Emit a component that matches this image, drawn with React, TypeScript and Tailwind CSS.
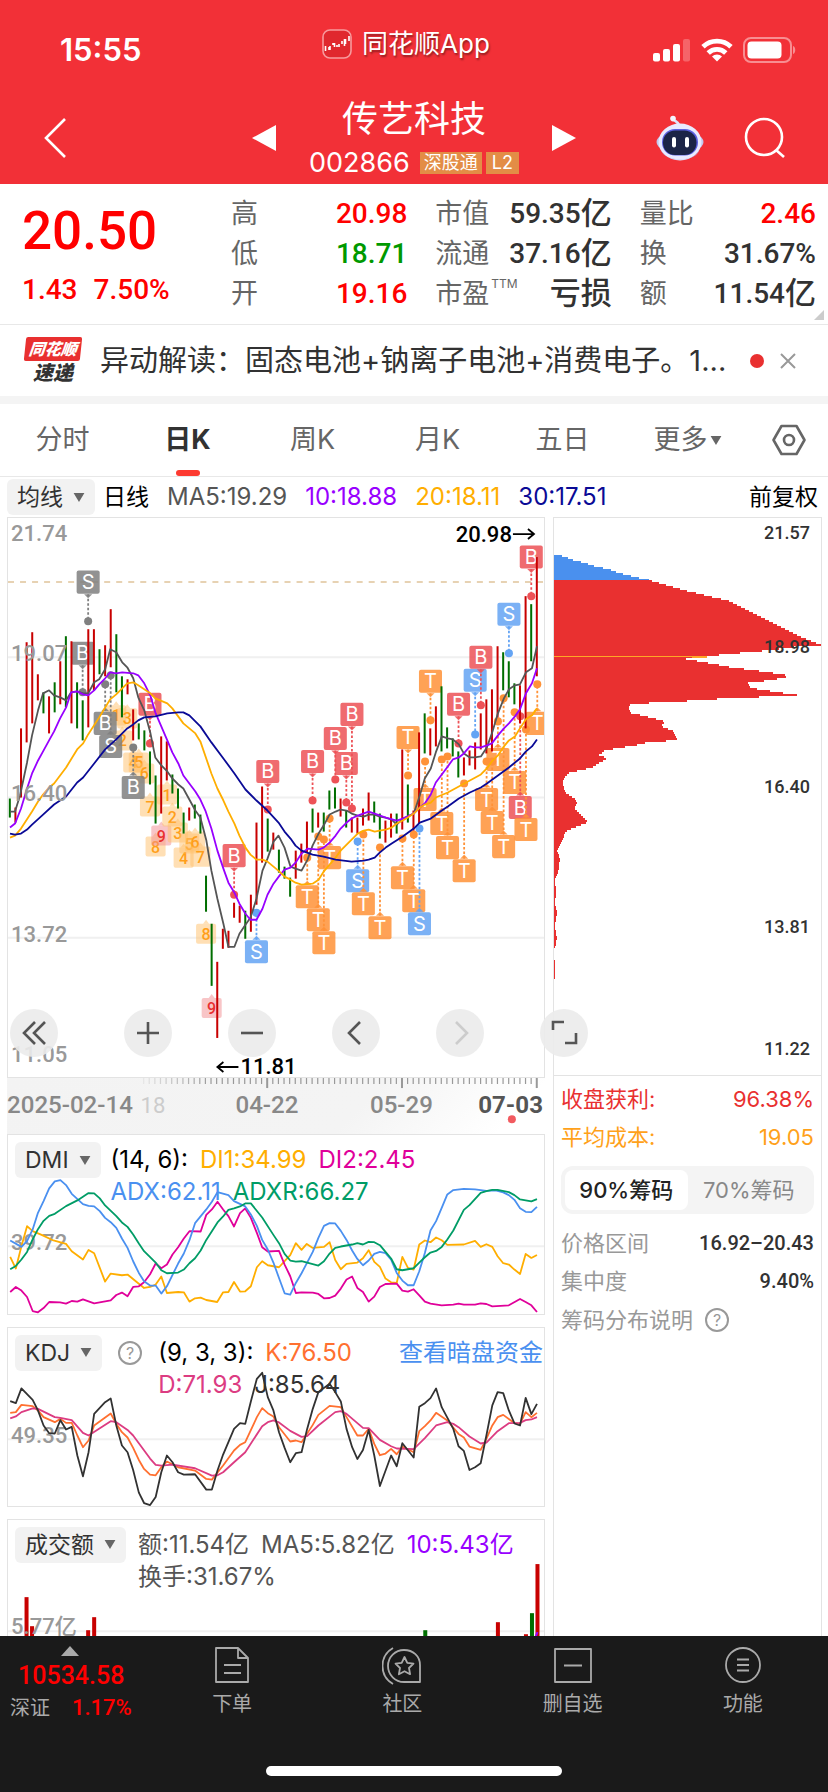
import React from "react";

const sans = "font-['Inter','Noto_Sans_CJK_SC',sans-serif]";
const num = "font-['Roboto','Noto_Sans_CJK_SC',sans-serif]";

const RED = "#c80000";
const GREEN = "#006e00";
const PITCH = 5.596;
const FIRST_X = 9.8;

/* High and low of each session, in chart units; "r" closes up, "g" closes down. */
const candles: [number, number, "r" | "g"][] = [
  [798, 817, "g"], [807, 822, "r"], [728, 797, "r"], [642, 742, "r"], [632, 723, "r"],
  [674, 700, "r"], [692, 713, "g"], [696, 733, "r"], [682, 712, "g"], [661, 704, "r"],
  [636, 707, "g"], [641, 723, "r"], [682, 728, "g"], [700, 740, "g"], [629, 727, "r"],
  [629, 690, "r"], [649, 674, "g"], [645, 676, "r"], [609, 667, "r"], [634, 692, "g"],
  [676, 717, "g"], [679, 694, "r"], [709, 740, "r"], [723, 739, "g"], [730, 750, "g"],
  [751, 784, "g"], [775, 823, "g"], [736, 813, "r"], [741, 780, "r"], [774, 793, "g"],
  [788, 808, "g"], [812, 833, "g"], [807, 820, "r"], [804, 818, "g"], [814, 833, "g"],
  [875, 911, "g"], [923, 985, "g"], [961, 1037, "r"], [928, 948, "r"], [930, 947, "r"],
  [902, 917, "r"], [905, 922, "r"], [910, 938, "g"], [894, 931, "r"], [822, 904, "r"],
  [786, 862, "r"], [818, 851, "g"], [832, 849, "r"], [849, 872, "g"], [866, 878, "g"],
  [877, 896, "g"], [850, 878, "r"], [843, 862, "r"], [821, 852, "r"], [808, 832, "g"],
  [812, 827, "r"], [812, 831, "g"], [790, 809, "g"], [787, 808, "g"], [798, 816, "r"],
  [810, 827, "g"], [817, 832, "r"], [817, 833, "r"], [808, 825, "r"], [792, 820, "r"],
  [801, 822, "g"], [813, 838, "g"], [820, 842, "r"], [813, 837, "r"], [813, 833, "g"],
  [749, 829, "r"], [784, 822, "g"], [810, 830, "r"], [732, 823, "r"], [713, 753, "g"],
  [728, 755, "r"], [706, 746, "r"], [686, 751, "g"], [727, 748, "g"], [738, 756, "g"],
  [751, 777, "g"], [757, 775, "r"], [750, 765, "r"], [742, 769, "r"], [713, 749, "r"],
  [699, 753, "r"], [689, 751, "r"], [646, 717, "r"], [652, 690, "g"], [661, 697, "g"],
  [683, 704, "g"], [685, 723, "r"], [596, 728, "r"], [604, 661, "g"], [557, 676, "r"],
];

const ma5 =
  "10,811 15,811 20,795 27,762 32,735 38,710 43,693 49,690 54,695 60,697 66,700 71,692 77,691 83,693 88,693 94,682 99,679 105,669 110,649 116,652 122,662 127,667 133,678 138,697 144,710 150,732 155,757 161,765 167,771 172,778 178,784 183,788 189,799 195,810 200,817 206,840 211,870 217,898 223,923 228,946 234,946 239,933 245,924 250,917 256,898 262,870 267,858 273,841 278,835 284,847 290,866 295,868 301,870 307,859 312,845 318,833 323,825 329,814 335,811 340,809 346,810 351,813 357,815 363,816 368,814 374,814 379,816 385,817 391,819 396,824 402,818 407,816 413,813 419,795 424,778 430,768 435,752 441,736 447,738 452,739 458,744 463,753 469,757 474,757 480,756 486,747 491,733 497,713 503,698 508,689 514,685 519,684 525,672 531,668 536,646";
const ma10 =
  "10,827 15,823 21,808 27,788 32,773 38,760 43,751 49,740 54,731 60,718 66,707 71,692 77,691 83,694 88,695 94,690 99,684 105,678 110,672 116,673 122,672 133,673 138,675 144,683 150,695 155,712 161,726 167,740 172,752 178,763 183,775 189,783 195,791 200,799 205,810 211,828 217,850 223,868 228,882 234,892 239,903 245,913 250,919 256,919 262,908 267,894 273,883 279,875 284,869 290,867 295,862 301,853 307,848 318,849 323,847 329,842 335,835 340,828 346,822 351,818 357,815 368,811 374,813 385,817 396,820 402,818 413,813 419,807 424,803 430,794 435,782 441,774 447,766 452,759 458,757 463,753 469,746 474,747 480,747 486,745 491,743 497,735 503,728 508,723 514,716 519,709 525,693 531,683 536,668";
const ma20 =
  "10,837 15,835 21,828 32,811 38,801 43,794 49,787 54,783 66,767 77,749 83,743 88,734 99,717 110,699 116,694 122,688 127,683 133,682 138,685 150,693 155,698 167,703 172,708 183,723 195,733 200,741 211,773 217,788 223,800 228,811 234,823 239,835 245,847 250,854 256,859 262,859 267,861 273,866 279,871 284,876 290,879 295,882 301,884 312,883 318,879 323,871 329,864 335,857 340,850 346,844 351,839 357,833 363,830 368,829 374,831 379,830 385,829 391,827 396,823 402,820 407,817 413,813 419,807 424,804 430,802 435,797 447,792 458,786 469,780 480,774 486,768 491,761 497,755 503,746 508,740 514,736 519,728 525,719 531,715 536,708";
const ma30 =
  "10,833 15,834 21,833 27,829 32,824 43,814 54,804 66,796 77,782 83,777 94,763 105,749 116,739 127,728 133,724 138,720 144,717 155,716 167,713 178,712 183,712 189,715 200,726 211,742 223,758 234,773 245,789 256,800 267,810 278,822 284,831 290,838 295,845 301,850 312,854 323,856 335,859 351,861 363,860 368,859 374,857 379,852 385,847 391,843 402,836 413,828 419,822 430,818 441,810 447,806 458,798 469,792 480,787 486,783 497,775 508,767 519,758 525,751 531,746 536,739";

type Mark = [string, string, number, number, number];
const GRAY = "#808080";
const ROSE = "#ed5257";
const BLUE = "#64a4f4";
const ORANGE = "#ff9238";

/* Trade marks: letter, colour, x, centre of the tag, height of the dot. */
const marks: Mark[] = [
  ["S", GRAY, 88, 582, 621], ["B", GRAY, 82.5, 653, 692], ["B", GRAY, 105, 723, 684],
  ["S", GRAY, 110.5, 746, 675], ["B", GRAY, 133, 787, 747], ["B", ROSE, 149.7, 704, 743],
  ["B", ROSE, 267.3, 771, 809], ["B", ROSE, 233.7, 855, 894], ["S", BLUE, 256, 951, 912],
  ["B", ROSE, 312, 761, 800], ["B", ROSE, 334.7, 738, 779], ["B", ROSE, 345.7, 763, 802],
  ["B", ROSE, 351.3, 714, 808], ["T", ORANGE, 407.3, 737, 775], ["T", ORANGE, 429.7, 681, 720],
  ["B", ROSE, 457.7, 704, 743], ["S", BLUE, 474.3, 680, 734], ["B", ROSE, 480, 657, 705],
  ["S", BLUE, 508, 614, 653], ["B", ROSE, 530.3, 557, 596], ["T", ORANGE, 536.3, 723, 684],
  ["T", ORANGE, 497, 759, 721], ["T", ORANGE, 513.7, 782, 712], ["B", ROSE, 519.3, 807, 716],
  ["T", ORANGE, 525, 829, 729], ["T", ORANGE, 502.7, 846, 698], ["T", ORANGE, 491.3, 822, 761],
  ["T", ORANGE, 485.7, 799, 761], ["T", ORANGE, 463.3, 870, 783], ["T", ORANGE, 446.7, 847, 756],
  ["T", ORANGE, 441, 823, 759], ["T", ORANGE, 424.3, 799, 761], ["T", ORANGE, 306.7, 896, 857],
  ["T", ORANGE, 317.7, 919, 836], ["T", ORANGE, 323.3, 942, 839], ["T", ORANGE, 329, 857, 818],
  ["S", BLUE, 357, 880, 841], ["T", ORANGE, 362.7, 903, 834], ["T", ORANGE, 379.3, 927, 847],
  ["T", ORANGE, 401.7, 877, 838], ["T", ORANGE, 413, 900, 834], ["S", BLUE, 418.7, 923, 828],
];

const counts: [string, number, number][] = [
  ["1", 116, 715], ["3", 127, 718], ["2", 122, 740], ["4", 133, 762], ["5", 138.5, 762],
  ["6", 144, 773], ["7", 149.7, 806], ["8", 155.3, 846], ["9", 161, 835], ["1", 166.7, 794],
  ["2", 172, 816], ["3", 177.5, 832], ["4", 183.3, 857], ["5", 189, 843], ["6", 194.7, 841],
  ["7", 200, 856], ["8", 205.7, 933], ["9", 211.3, 1007],
];

/* Chip distribution outline: [height, width]. */
const chips: [number, number][] = [
  [555, 0], [556, 8], [560, 19], [563, 31], [566.5, 42], [569, 54], [573, 65], [576, 77], [579, 89],
  [580, 95], [590, 129], [601, 175], [610, 193], [625, 223], [635.5, 244], [642, 259], [645, 267],
  [647, 240], [650.5, 213], [653.5, 181], [656, 155], [657.7, 138], [659, 132], [663, 154], [667, 175],
  [673.5, 223], [676, 236], [679, 223], [681, 210], [683, 194], [688, 197], [691.4, 218], [695, 243],
  [697, 205], [698, 176], [700, 149], [701.7, 121], [703, 95], [705, 76], [708, 74], [713, 77],
  [716.6, 93], [721.6, 111], [726, 107], [731, 119], [739, 123], [741, 112], [743, 91], [745.7, 80],
  [748.4, 62], [751, 50], [755, 45], [758, 53], [762, 47], [768, 37], [770.6, 25], [773, 15],
  [778, 10], [783.6, 9], [792, 11], [799, 21], [803, 23], [808.5, 20], [814, 26], [822, 34],
  [826, 24], [831.5, 12], [843, 7], [850, 3], [859, 6], [873.6, 4], [879, 1], [893, 2], [904, 1],
  [912, 3], [918, 2], [927, 1], [939, 3], [942, 2], [948, 1],
];

function chipWidth(y: number) {
  for (let i = 1; i < chips.length; i++) {
    const [y0, w0] = chips[i - 1];
    const [y1, w1] = chips[i];
    if (y <= y1) return w0 + ((w1 - w0) * (y - y0)) / (y1 - y0);
  }
  return 0;
}

/* Stepped silhouette between two heights, one step every two units. */
function chipPath(from: number, to: number) {
  let d = `M552 ${from}`;
  for (let y = from; y < to; y += 2) {
    d += `H${552 + Math.round(chipWidth(y + 1))}V${Math.min(y + 2, to)}`;
  }
  return `${d}H552z`;
}

const UX = 1568 / 550;
/* Indicator series are stored on a 1568 wide, 3x tall raster. */
function scaled(points: string, top: number) {
  return points
    .split(" ")
    .map((p) => {
      const [x, y] = p.split(",").map(Number);
      return `${(x / UX).toFixed(1)},${(top + y / 3).toFixed(1)}`;
    })
    .join(" ");
}

const di1 =
  "29,407 45,442 61,375 77,315 93,330 120,342 152,358 188,368 204,390 236,415 252,386 268,396 299,481 315,457 347,462 363,460 410,500 427,497 443,490 459,466 475,515 507,512 523,513 539,541 555,531 571,529 587,536 618,542 635,513 650,512 666,482 683,511 698,510 714,495 731,438 746,420 762,432 794,438 810,420 826,402 842,366 858,386 873,368 890,380 922,377 938,363 954,416 970,444 986,428 1017,424 1033,411 1049,387 1065,422 1081,437 1097,472 1113,483 1129,485 1145,407 1161,440 1177,445 1193,370 1209,358 1225,363 1241,349 1257,357 1273,371 1320,370 1352,359 1368,377 1384,369 1401,377 1416,405 1432,426 1448,430 1464,445 1480,458 1496,398 1512,410 1528,401";
const di2 =
  "29,512 45,497 61,508 77,527 93,569 108,573 124,560 140,542 171,543 188,547 204,539 220,541 236,534 268,546 315,537 331,521 347,514 363,525 379,497 395,495 410,483 427,459 443,427 459,441 475,430 491,400 507,378 523,352 539,330 571,331 587,281 603,265 619,242 635,265 650,285 666,316 683,276 698,262 714,290 731,335 746,378 762,391 794,389 810,430 826,465 842,515 858,513 890,514 906,518 922,531 938,530 954,523 970,502 986,475 1002,466 1017,500 1033,512 1049,541 1065,526 1081,497 1097,488 1129,487 1145,508 1161,511 1177,504 1193,522 1209,541 1225,547 1257,552 1290,550 1305,547 1320,550 1352,550 1368,546 1384,548 1401,555 1448,552 1480,533 1496,542 1512,552 1528,572";
const adx =
  "29,358 61,377 77,360 93,325 108,275 124,240 140,202 156,181 172,177 188,192 204,218 236,249 252,254 268,256 284,270 299,290 315,303 331,320 347,352 363,380 379,420 395,455 410,480 427,493 443,493 459,517 475,495 507,427 523,397 539,357 555,306 587,265 603,242 619,213 650,222 666,240 698,256 714,280 731,314 746,356 762,385 778,424 794,470 810,516 826,520 842,485 858,456 890,392 906,350 922,314 938,306 954,307 970,329 986,356 1002,388 1017,413 1033,432 1049,418 1065,398 1081,392 1097,396 1113,415 1129,455 1145,478 1161,492 1177,492 1193,450 1209,395 1225,328 1241,300 1257,260 1273,220 1290,207 1320,203 1352,205 1384,209 1410,208 1432,214 1448,222 1464,236 1480,261 1496,272 1512,273 1528,257";
const adxr =
  "29,444 45,434 61,415 77,392 93,355 108,324 124,299 140,284 156,278 188,255 220,238 236,227 252,216 268,217 284,232 299,253 331,285 347,304 363,317 379,340 395,367 410,390 443,424 459,447 475,456 507,454 523,445 539,426 555,411 571,388 587,356 619,304 635,286 650,266 666,262 683,256 698,247 714,247 746,289 778,341 794,366 810,398 826,418 842,421 858,420 906,433 922,420 938,397 954,380 970,376 1002,370 1017,366 1033,370 1049,362 1065,363 1081,372 1097,392 1113,412 1129,444 1145,447 1177,441 1193,424 1209,408 1225,394 1241,389 1257,377 1273,355 1290,328 1320,266 1336,252 1368,215 1384,210 1401,206 1416,206 1448,213 1464,222 1480,235 1512,241 1528,234";
const kdjJ =
  "29,267 45,273 61,229 77,246 93,263 108,295 124,340 140,363 156,364 172,324 188,352 204,344 220,430 236,492 252,420 268,305 299,270 315,259 331,340 347,400 363,420 379,473 395,541 410,572 427,578 443,554 459,480 475,430 491,450 507,480 523,487 555,486 587,532 603,532 619,475 635,427 666,350 683,333 698,335 714,268 731,200 746,182 762,255 778,295 794,360 810,407 826,450 842,423 858,420 874,350 890,290 906,240 938,215 954,240 970,268 986,350 1002,405 1017,440 1033,413 1049,353 1065,430 1081,521 1113,430 1129,462 1145,393 1177,436 1193,284 1209,273 1225,258 1241,229 1257,285 1290,350 1305,402 1320,416 1336,473 1352,465 1368,453 1384,370 1401,280 1416,240 1432,243 1448,295 1464,334 1480,340 1496,257 1512,306 1528,275";
const kdjK =
  "29,302 45,300 61,278 93,282 108,295 124,315 156,330 172,320 188,332 204,332 220,370 236,405 252,385 268,340 315,304 331,335 347,360 363,376 379,407 395,443 410,470 427,487 443,489 459,465 475,448 507,465 555,475 587,500 603,502 635,460 666,415 683,398 698,390 731,315 746,288 762,303 778,313 794,345 826,388 842,385 858,390 890,338 906,308 938,281 970,285 986,315 1017,370 1033,370 1049,350 1065,395 1081,429 1097,424 1113,410 1129,426 1145,403 1177,420 1193,357 1209,342 1225,325 1241,302 1273,325 1305,365 1320,376 1336,403 1368,413 1384,380 1401,340 1416,315 1432,308 1464,333 1480,335 1496,300 1512,315 1528,302";
const kdjD =
  "29,319 45,313 61,300 93,289 108,290 156,315 172,317 204,324 236,362 252,370 315,327 331,330 363,353 379,370 427,439 443,458 459,460 491,457 555,468 603,490 619,489 635,480 666,450 698,420 746,342 762,330 778,325 794,331 826,356 858,374 874,372 906,340 954,300 970,297 986,305 1033,347 1049,348 1081,383 1113,402 1129,409 1177,411 1209,378 1241,340 1273,330 1290,335 1305,345 1336,373 1368,394 1384,391 1416,357 1448,333 1480,332 1496,324 1512,322 1528,315";

const volumes: [number, number, string][] = [
  [26.5, 1595, RED], [32, 1624, RED], [88, 1628, RED], [94, 1615, RED], [424.5, 1628, GREEN],
  [497, 1620, RED], [502.5, 1634, GREEN], [525, 1632, RED], [531, 1611, GREEN], [536.5, 1562, RED],
];

function Caret({ className = "" }: { className?: string }) {
  return (
    <svg viewBox="0 0 12 10" className={`h-[9px] w-3 ${className}`} aria-hidden="true">
      <path d="M0 0h12L6 10z" fill="currentColor" />
    </svg>
  );
}

function Line({ points, color }: { points: string; color: string }) {
  return <polyline points={points} fill="none" stroke={color} strokeWidth="1.8" strokeLinejoin="round" />;
}

function AxisLabel({ x, y, children }: { x: number; y: number; children: string }) {
  return (
    <text x={x} y={y} fill="#999" fontSize="22" fontWeight="500" className={num}>
      {children}
    </text>
  );
}

function StatusBar() {
  return (
    <div className="grid grid-cols-3 items-center pt-7 pr-8 pl-10">
      <div className="pt-1 pl-5 text-[31px] leading-9 font-semibold">15:55</div>
      <div className="-mt-2 flex items-center justify-center gap-2.5 pr-6">
        <svg viewBox="0 0 30 30" className="size-[30px]" aria-hidden="true">
          <rect x="1" y="1" width="28" height="28" rx="7" fill="#e0282e" stroke="#f79a9d" strokeWidth="1.6" />
          <path
            d="M3.500 17v5M7 18v3M8 17v4M11 16v-2M12.500 14v4M15 16v2M17 15v3M20 12v3M22.500 10v7M23.500 10v5M27 7v5"
            stroke="#fff"
            strokeWidth="1.600"
          />
        </svg>
        <span className="text-[26px] leading-8 whitespace-nowrap [text-shadow:1px_2px_2px_rgba(0,0,0,0.4)]">
          同花顺App
        </span>
      </div>
      <div className="flex items-center justify-end gap-2.5 pt-1">
        <svg viewBox="0 0 38 24" className="h-6 w-[38px]" fill="#fff" aria-hidden="true">
          <rect x="0" y="15" width="7" height="8.500" rx="2" />
          <rect x="10" y="11" width="7" height="12.500" rx="2" />
          <rect x="20" y="6" width="7" height="17.500" rx="2" />
          <rect x="30" y="1" width="7" height="22.500" rx="2" opacity=".25" />
        </svg>
        <svg viewBox="0 0 32 24" className="h-6 w-8" fill="none" stroke="#fff" strokeWidth="4.800" aria-hidden="true">
          <path d="M2 8.800a20 20 0 0 1 28 0" />
          <path d="M7.200 15a12.600 12.600 0 0 1 17.600 0" />
          <path d="M16 23.500l-5-5a7 7 0 0 1 10 0z" fill="#fff" stroke="none" />
        </svg>
        <svg viewBox="0 0 53 26" className="h-[26px] w-[53px]" aria-hidden="true">
          <rect x="1" y="1" width="47" height="24" rx="7" fill="none" stroke="#fff" strokeOpacity=".45" strokeWidth="2" />
          <rect x="4.500" y="4.500" width="34" height="17" rx="4" fill="#fff" />
          <path d="M50 9c3 1 3 7 0 8z" fill="#fff" opacity=".45" />
        </svg>
      </div>
    </div>
  );
}

function Header() {
  return (
    <header className="h-[184px] shrink-0 bg-[#f23037] text-white">
      <StatusBar />
      <div className="grid grid-cols-[1fr_auto_1fr] items-center px-10 pt-[29px]">
        <button aria-label="返回" className="w-10">
          <svg viewBox="0 0 30 42" className="h-[42px] w-[30px]" fill="none" stroke="#fff" strokeWidth="2.600">
            <path d="M25 2L6 21l19 19" />
          </svg>
        </button>
        <div className="flex items-center gap-7">
          <button aria-label="上一只">
            <svg viewBox="0 0 24 26" className="h-[26px] w-6" fill="#fff">
              <path d="M24 0v26L0 13z" />
            </svg>
          </button>
          <div className="flex w-[220px] flex-col items-center gap-1.5">
            <h1 className="text-[36px] leading-[44px]">传艺科技</h1>
            <div className="flex items-center gap-1 whitespace-nowrap">
              <span className="mr-1.5 text-[27px] leading-8">002866</span>
              <span className="bg-[#e38d46] px-1 text-lg leading-[22px]">深股通</span>
              <span className="bg-[#e38d46] px-1.5 text-lg leading-[22px]">L2</span>
            </div>
          </div>
          <button aria-label="下一只">
            <svg viewBox="0 0 24 26" className="h-[26px] w-6" fill="#fff">
              <path d="M0 0v26l24-13z" />
            </svg>
          </button>
        </div>
        <div className="flex items-center justify-end gap-10 pr-0.5">
          <button aria-label="智能助手">
            <svg viewBox="0 0 48 46" className="h-[46px] w-12">
              <path d="M23 12C24 7 19 7 17 4" fill="none" stroke="#dfe3fb" strokeWidth="2.600" />
              <circle cx="17" cy="3.600" r="2.800" fill="#f4f5ff" />
              <ellipse cx="24" cy="27" rx="23.500" ry="11" fill="#c3c8ee" />
              <ellipse cx="24" cy="27" rx="21.500" ry="18.500" fill="#e9eaff" />
              <path d="M5 35c6 13 32 13 38 0-2 12-34 13-38 0z" fill="#b8b4ec" />
              <rect x="6" y="14" width="36" height="26.500" rx="13" fill="#5b5fe0" />
              <rect x="7" y="15.500" width="33.500" height="24.500" rx="12" fill="#1c2447" />
              <rect x="16" y="22" width="4" height="10.500" rx="2" fill="#fff" />
              <rect x="29" y="22" width="4" height="10.500" rx="2" fill="#fff" />
            </svg>
          </button>
          <button aria-label="搜索">
            <svg viewBox="0 0 42 42" className="size-[42px]" fill="none" stroke="#fff" strokeWidth="2.600">
              <circle cx="20" cy="20" r="18" />
              <path d="M32 33l8 7" />
            </svg>
          </button>
        </div>
      </div>
    </header>
  );
}

type QuoteItem = { label: string; sup?: string; value?: string; unit?: string; color: string };
const quotes: QuoteItem[][] = [
  [
    { label: "高", value: "20.98", color: "text-[#ff0000]" },
    { label: "低", value: "18.71", color: "text-[#009900]" },
    { label: "开", value: "19.16", color: "text-[#ff0000]" },
  ],
  [
    { label: "市值", value: "59.35", unit: "亿", color: "text-[#323232]" },
    { label: "流通", value: "37.16", unit: "亿", color: "text-[#323232]" },
    { label: "市盈", sup: "TTM", unit: "亏损", color: "text-[#323232]" },
  ],
  [
    { label: "量比", value: "2.46", color: "text-[#ff0000]" },
    { label: "换", value: "31.67%", color: "text-[#323232]" },
    { label: "额", value: "11.54", unit: "亿", color: "text-[#323232]" },
  ],
];

function Quote() {
  return (
    <section className="relative flex h-[141px] border-b border-[#e8e8e8] pr-3 pl-[22px]">
      <div className={`w-[209px] text-[#ff0000] ${num} font-medium`}>
        <div className="pt-4 text-[53px] leading-[62px]">20.50</div>
        <div className="flex gap-4 pt-[10px] text-[28px] leading-9">
          <span>1.43</span>
          <span>7.50%</span>
        </div>
      </div>
      <div className="grid flex-1 grid-cols-3 gap-x-7 pt-[10px]">
        {quotes.map((col, i) => (
          <dl key={i} className="flex flex-col">
            {col.map((q) => (
              <div key={q.label} className="flex h-10 items-center justify-between whitespace-nowrap">
                <dt className="flex text-[27px] leading-10 text-[#666]">
                  {q.label}
                  {q.sup && <sup className="top-0 pl-0.5 text-xs leading-5">{q.sup}</sup>}
                </dt>
                <dd className={`${num} flex text-[28px] leading-10 font-medium ${q.color}`}>
                  {q.value}
                  {q.unit && <span className="text-[31px]">{q.unit}</span>}
                </dd>
              </div>
            ))}
          </dl>
        ))}
      </div>
      <svg viewBox="0 0 10 10" className="absolute right-1 bottom-1 size-[10px]" aria-hidden="true">
        <path d="M10 0v10H0z" fill="#ccc" />
      </svg>
    </section>
  );
}

function News() {
  return (
    <section className="flex h-[79px] items-center border-b-8 border-[#f4f4f4] pr-8 pl-[22px]">
      <div className="flex w-[62px] flex-col items-center text-base font-black whitespace-nowrap italic">
        <div className="-skew-x-6 rounded-xs bg-[#e93030] px-1 leading-6 text-white">同花顺</div>
        <div className="text-xl leading-6 text-[#323232]">速递</div>
      </div>
      <a href="#news" className="min-w-0 flex-1 truncate pl-4 text-[29px] leading-10 text-[#323232]">
        异动解读：固态电池+钠离子电池+消费电子。1...
      </a>
      <span className="size-3.5 rounded-full bg-[#e93030]" />
      <button aria-label="关闭" className="pl-4">
        <svg viewBox="0 0 16 16" className="size-4" fill="none" stroke="#999" strokeWidth="2">
          <path d="M1 1l14 14M15 1L1 15" />
        </svg>
      </button>
    </section>
  );
}

function Tabs() {
  return (
    <nav className="flex h-[73px] border-b border-[#e8e8e8] text-[27px] text-[#666]">
      <div className="grid flex-1 grid-cols-6">
        {["分时", "日K", "周K", "月K", "五日", "更多"].map((t) => (
          <button key={t} className="relative flex items-center justify-center gap-0.5">
            <span className={t === "日K" ? "font-bold text-[#323232]" : ""}>{t}</span>
            {t === "更多" && <Caret />}
            {t === "日K" && <span className="absolute bottom-0 h-1.5 w-6 rounded-[3px] bg-[#fd3a30]" />}
          </button>
        ))}
      </div>
      <button aria-label="设置" className="flex w-[78px] items-center justify-center">
        <svg viewBox="0 0 34 32" className="h-8 w-[34px]" fill="none" stroke="#666" strokeWidth="2.600">
          <path d="M9.500 2h15L32.500 16l-8 14h-15L1.500 16z" strokeLinejoin="round" />
          <circle cx="17" cy="16" r="5" />
        </svg>
      </button>
    </nav>
  );
}

function Picker({ children }: { children: string }) {
  return (
    <button className="flex h-9 shrink-0 items-center gap-2.5 rounded-md bg-[#f2f2f2] px-2.5 text-[23px] text-[#323232]">
      {children}
      <Caret className="text-[#666]" />
    </button>
  );
}

function Averages() {
  return (
    <div className="flex h-10 items-center gap-[18px] pr-2.5 pl-[7px] text-2xl whitespace-nowrap">
      <div className="flex items-center gap-2 text-[23px]">
        <Picker>均线</Picker>
        <span className="text-black">日线</span>
      </div>
      <span className="text-[#555]">MA5:19.29</span>
      <span className="text-[#9800ff]">10:18.88</span>
      <span className="text-[#ffae00]">20:18.11</span>
      <span className="text-[#0a0a96]">30:17.51</span>
      <span className="ml-auto text-[23px] text-black">前复权</span>
    </div>
  );
}

function Tag({ mark: [letter, color, x, y, dot] }: { mark: Mark }) {
  const below = y > dot;
  const edge = below ? y - 12 : y + 12;
  const tip = below ? -4 : 4;
  return (
    <g>
      <path d={`M${x} ${edge}V${dot}`} stroke={color} strokeWidth="1.800" strokeDasharray="2.500 2" />
      <circle cx={x} cy={dot} r="4" fill={color} />
      <g opacity=".85">
        <rect x={x - 11.5} y={y - 11.5} width="23" height="23" rx="2" fill={color} />
        <path d={`M${x - 4} ${edge}L${x} ${edge + tip}L${x + 4} ${edge}z`} fill={color} />
      </g>
      <text x={x} y={y + 7} textAnchor="middle" fontSize="20" fill="#fff">
        {letter}
      </text>
    </g>
  );
}

function MainChart() {
  return (
    <svg viewBox="8 518 535 558" className="block w-full" role="img" aria-label="日K线">
      <g stroke="#f0f0f0" strokeWidth="2">
        <path d="M8 657H543M8 797H543M8 937H543" />
      </g>
      <path d="M8 582H543" stroke="#e0c49a" strokeWidth="1.500" strokeDasharray="6 6" />
      {counts.map(([n, x, y], i) => (
        <g key={i}>
          <rect x={x - 10} y={y - 10} width="20" height="20" rx="2" fill={n === "9" ? "#f28b90" : "#ffc069"} opacity=".5" />
          <path d={`M${x - 3} ${y - 10}L${x} ${y - 14}L${x + 3} ${y - 10}z`} fill={n === "9" ? "#f28b90" : "#ffc069"} opacity=".5" />
          <text x={x} y={y + 6} textAnchor="middle" fontSize="16" fontWeight="500" fill={n === "9" ? "#e93030" : "#ff9f1a"} className={num}>
            {n}
          </text>
        </g>
      ))}
      {marks.map((m, i) => (
        <Tag key={i} mark={m} />
      ))}
      {candles.map(([hi, lo, c], i) => (
        <rect key={i} x={FIRST_X + i * PITCH - 1} y={hi} width="2" height={lo - hi} fill={c === "r" ? RED : GREEN} />
      ))}
      <Line points={ma5} color="#555" />
      <Line points={ma10} color="#9800ff" />
      <Line points={ma20} color="#ffae00" />
      <Line points={ma30} color="#0a0a96" />
      <AxisLabel x={11} y={541}>21.74</AxisLabel>
      <AxisLabel x={11} y={661}>19.07</AxisLabel>
      <AxisLabel x={11} y={800}>16.40</AxisLabel>
      <AxisLabel x={11} y={941}>13.72</AxisLabel>
      <AxisLabel x={11} y={1061}>11.05</AxisLabel>
      <g fill="#000" fontSize="22" fontWeight="500" className={num}>
        <text x="511" y="542" textAnchor="end">20.98</text>
        <text x="240" y="1073">11.81</text>
      </g>
      <path d="M512 534H533M527 529L533 534L527 539" fill="none" stroke="#000" strokeWidth="1.800" />
      <path d="M238 1066H217M223 1061L217 1066L223 1071" fill="none" stroke="#000" strokeWidth="1.800" />
    </svg>
  );
}

function TimeAxis() {
  const long = [46, 70, 94];
  return (
    <svg viewBox="8 1077 536 56" className="block w-full" role="img" aria-label="日期">
      <defs>
        <linearGradient id="track" x1="0" x2="1" y1="0" y2="0.1">
          <stop offset="0" stopColor="#f3f3f3" />
          <stop offset=".7" stopColor="#f4f4f4" />
          <stop offset="1" stopColor="#fff" />
        </linearGradient>
      </defs>
      <rect x="8" y="1077" width="536" height="56" fill="url(#track)" />
      {Array.from({ length: 71 }, (_, k) => k + 24).map((i) => (
        <path
          key={i}
          d={`M${FIRST_X + i * PITCH} 1077v${long.includes(i) ? 10 : 6}`}
          stroke="#999"
          strokeWidth={long.includes(i) ? 2 : 1.2}
          opacity={Math.min(1, (i - 22) / 14)}
        />
      ))}
      <g className={num} fontSize="24" fontWeight="500" fill="#888">
        <text x="8" y="1112">2025-02-14</text>
        <text x="141" y="1112" fill="#ccc" fontSize="22" fontWeight="400">18</text>
        <text x="267" y="1112" textAnchor="middle">04-22</text>
        <text x="401" y="1112" textAnchor="middle">05-29</text>
        <text x="542" y="1112" textAnchor="end" fontWeight="700" fill="#555">07-03</text>
      </g>
      <circle cx="511" cy="1118" r="4" fill="#f25a5f" />
    </svg>
  );
}

function ChartControls() {
  const base = "flex size-12 items-center justify-center rounded-full bg-[#ebebeb]/90";
  const icons: [string, string][] = [
    ["更早", "M15 3L4 14l11 11M25 3L14 14l11 11"],
    ["放大", "M3 14h22M14 3v22"],
    ["缩小", "M3 14h22"],
    ["左移", "M18 3L7 14l11 11"],
    ["右移", "M10 3l11 11-11 11"],
    ["全屏", "M3 11V3h11M26 14v10H15"],
  ];
  return (
    <div className="absolute top-[492px] left-[10px] z-10 flex gap-14">
      {icons.map(([label, d], i) => (
        <button key={label} aria-label={label} className={i === 0 ? `${base} mr-[10px]` : base}>
          <svg viewBox="0 0 28 28" className="size-7" fill="none" stroke={label === "右移" ? "#ccc" : "#555"} strokeWidth="2.600">
            <path d={d} />
          </svg>
        </button>
      ))}
    </div>
  );
}

function SubChart({ chart, children }: { chart: React.ReactNode; children: React.ReactNode }) {
  return (
    <section className="grid border border-[#e3e3e3]">
      <div className="col-start-1 row-start-1">{chart}</div>
      <div className="z-0 col-start-1 row-start-1 flex items-start pt-[7px] pl-[7px] text-2xl leading-8 whitespace-nowrap">
        {children}
      </div>
    </section>
  );
}

function Dmi() {
  return (
    <SubChart
      chart={
        <svg viewBox="8 1134 535 178" className="block w-full" role="img" aria-label="DMI">
          <path d="M8 1245H543" stroke="#f0f0f0" strokeWidth="2" />
          <AxisLabel x={11} y={1249}>39.72</AxisLabel>
          <Line points={scaled(di1, 1120)} color="#ffae00" />
          <Line points={scaled(di2, 1120)} color="#e0009a" />
          <Line points={scaled(adx, 1120)} color="#4a90f0" />
          <Line points={scaled(adxr, 1120)} color="#009c66" />
        </svg>
      }
    >
      <Picker>DMI</Picker>
      <div className="pt-0.5 pl-2.5">
        <div className="flex gap-3">
          <span className="text-black">(14, 6):</span>
          <span className="text-[#ffae00]">DI1:34.99</span>
          <span className="text-[#e0009a]">DI2:2.45</span>
        </div>
        <div className="flex gap-3">
          <span className="text-[#4a90f0]">ADX:62.11</span>
          <span className="text-[#009c66]">ADXR:66.27</span>
        </div>
      </div>
    </SubChart>
  );
}

function Help() {
  return (
    <button aria-label="说明" className="flex size-6 shrink-0 items-center justify-center rounded-full border-2 border-[#999] text-base leading-5 text-[#999]">
      ?
    </button>
  );
}

function Kdj() {
  return (
    <SubChart
      chart={
        <svg viewBox="8 1326 535 178" className="block w-full" role="img" aria-label="KDJ">
          <path d="M8 1437H543" stroke="#f0f0f0" strokeWidth="2" />
          <AxisLabel x={11} y={1441}>49.35</AxisLabel>
          <Line points={scaled(kdjK, 1310)} color="#ff7030" />
          <Line points={scaled(kdjD, 1310)} color="#dc3c82" />
          <Line points={scaled(kdjJ, 1310)} color="#323232" />
        </svg>
      }
    >
      <Picker>KDJ</Picker>
      <div className="px-4 pt-1.5">
        <Help />
      </div>
      <div className="flex-1 pt-0.5">
        <div className="flex gap-3">
          <span className="text-black">(9, 3, 3):</span>
          <span className="text-[#ff7030]">K:76.50</span>
          <a href="#funds" className="ml-auto pr-px text-[#4a90f0]">查看暗盘资金</a>
        </div>
        <div className="flex gap-3">
          <span className="text-[#dc3c82]">D:71.93</span>
          <span className="text-[#323232]">J:85.64</span>
        </div>
      </div>
    </SubChart>
  );
}

function Turnover() {
  return (
    <SubChart
      chart={
        <svg viewBox="8 1518 535 178" className="block w-full" role="img" aria-label="成交额">
          <path d="M8 1629H543" stroke="#f0f0f0" strokeWidth="2" />
          {volumes.map(([x, y, c]) => (
            <rect key={x} x={x - 2} y={y} width="4" height={1696 - y} fill={c} />
          ))}
          <path d="M530 1646L536.500 1630" stroke="#9800ff" strokeWidth="2" />
          <AxisLabel x={11} y={1632}>5.77亿</AxisLabel>
        </svg>
      }
    >
      <Picker>成交额</Picker>
      <div className="pt-0.5 pl-3">
        <div className="flex gap-3">
          <span className="text-[#555]">额:11.54亿</span>
          <span className="text-[#555]">MA5:5.82亿</span>
          <span className="text-[#9800ff]">10:5.43亿</span>
        </div>
        <div className="text-[#555]">换手:31.67%</div>
      </div>
    </SubChart>
  );
}

const chipLabels: [string, number][] = [
  ["21.57", 539], ["18.98", 653], ["16.40", 793], ["13.81", 933], ["11.22", 1055],
];

function ChipPanel() {
  return (
    <aside className="border border-b-0 border-[#e3e3e3]">
      <svg viewBox="552 518 267 557" className="block w-full border-b border-[#e3e3e3]" role="img" aria-label="筹码分布">
        <path d={chipPath(555, 580)} fill="#4a90ee" />
        <path d={chipPath(580, 948)} fill="#e93030" />
        <rect x="552" y="960" width="1" height="19" fill="#e93030" />
        <rect x="552" y="656" width="138" height="1" fill="#ffa726" />
        <rect x="690" y="656" width="15" height="2" fill="#ffa726" />
        <g className={num} fontSize="18" fontWeight="500" fill="#323232" textAnchor="end">
          {chipLabels.map(([t, y]) => (
            <text key={t} x="808" y={y}>{t}</text>
          ))}
        </g>
      </svg>
      <div className="px-[7px] pt-1 text-[22px] whitespace-nowrap">
        <div className="flex h-[38px] items-center justify-between text-[#e93030]">
          <span>收盘获利:</span>
          <span>96.38%</span>
        </div>
        <div className="flex h-[38px] items-center justify-between text-[#ffa11a]">
          <span>平均成本:</span>
          <span>19.05</span>
        </div>
        <div className="my-[10px] grid h-12 grid-cols-2 rounded-xl bg-[#f4f4f4] p-1">
          <button className="rounded-lg bg-white font-medium text-[#222]">90%筹码</button>
          <button className="text-[#888]">70%筹码</button>
        </div>
        <div className="flex h-[38px] items-center justify-between text-[#999]">
          <span>价格区间</span>
          <span className={`${num} text-[20px] font-medium text-[#323232]`}>16.92–20.43</span>
        </div>
        <div className="flex h-[38px] items-center justify-between text-[#999]">
          <span>集中度</span>
          <span className={`${num} text-[20px] font-medium text-[#323232]`}>9.40%</span>
        </div>
        <div className="flex h-10 items-center gap-3 text-[#999]">
          <span>筹码分布说明</span>
          <Help />
        </div>
      </div>
    </aside>
  );
}

const actions: { label: string; icon: React.ReactNode }[] = [
  {
    label: "下单",
    icon: (
      <>
        <path d="M2 1h22l10 10v24H2zM24 1v10h10M10 18h17M10 26h17" />
      </>
    ),
  },
  {
    label: "社区",
    icon: (
      <>
        <path d="M9 1C-5 9-5 29 9 37M20 3a15.500 15.500 0 0 0 0 32h16V18C36 9 29 3 20 3z" />
        <path d="M20.500 10l2.800 5.800 6.200.8-4.500 4.400 1.100 6.200-5.600-3-5.600 3 1.100-6.200-4.500-4.400 6.200-.8z" />
      </>
    ),
  },
  { label: "删自选", icon: <path d="M0 2h36v33H0zM9 18.500h18" /> },
  {
    label: "功能",
    icon: (
      <>
        <circle cx="18" cy="18" r="17" />
        <path d="M12 12.500h12M12 18h12M12 23.500h12" />
      </>
    ),
  },
];

function BottomBar() {
  return (
    <footer className="flex h-[156px] shrink-0 flex-col justify-between bg-[#1a1a1a] text-xl text-[#aaa]">
      <div className="flex pt-2.5">
        <button className="flex w-[147px] flex-col items-start pl-[10px] whitespace-nowrap">
          <svg viewBox="0 0 18 10" className="ml-[51px] h-[10px] w-[18px]" aria-hidden="true">
            <path d="M9 0l9 10H0z" fill="#aaa" />
          </svg>
          <span className={`${num} pl-2 text-[25px] leading-10 font-medium text-[#ff0000]`}>10534.58</span>
          <span className="flex items-center gap-[22px]">
            <span className="leading-6">深证</span>
            <span className={`${num} text-[22px] leading-6 font-medium text-[#ff0000]`}>1.17%</span>
          </span>
        </button>
        <div className="grid flex-1 grid-cols-4">
          {actions.map((a) => (
            <button key={a.label} className="flex flex-col items-center gap-1">
              <svg viewBox="-2 -1 40 40" className="size-10" fill="none" stroke="#aaa" strokeWidth="1.800" strokeLinejoin="round">
                {a.icon}
              </svg>
              <span className="leading-7">{a.label}</span>
            </button>
          ))}
        </div>
      </div>
      <div className="mx-auto mb-4 h-2.5 w-[296px] rounded-full bg-white" />
    </footer>
  );
}

export default function App() {
  return (
    <div className={`flex h-screen flex-col overflow-hidden bg-white ${sans}`}>
      <Header />
      <main className="min-h-0 flex-1 overflow-hidden">
        <Quote />
        <News />
        <Tabs />
        <Averages />
        <div className="relative grid grid-cols-[2fr_1fr] gap-2 pr-1.5 pl-[7px]">
          <ChartControls />
          <div>
            <div className="border border-[#e3e3e3]">
              <MainChart />
            </div>
            <TimeAxis />
            <div className="flex flex-col gap-3">
              <Dmi />
              <Kdj />
              <Turnover />
            </div>
          </div>
          <ChipPanel />
        </div>
      </main>
      <BottomBar />
    </div>
  );
}
